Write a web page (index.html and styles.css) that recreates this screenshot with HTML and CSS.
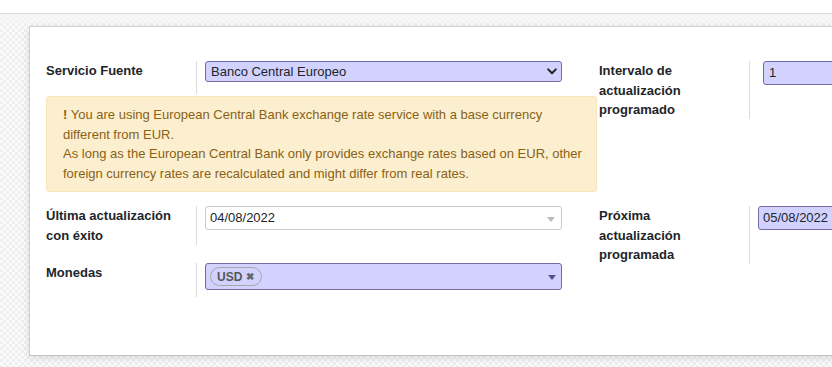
FILE: index.html
```html
<!DOCTYPE html>
<html lang="es">
<head>
  <meta charset="UTF-8">
  <meta name="viewport" content="width=device-width, initial-scale=1.0">
  <title>Tipos de cambio</title>
  <link rel="stylesheet" href="styles.css">
</head>
<body>
  <div class="topbar"></div>

  <div class="canvas">
    <div class="sheet">

      <div class="section first">
        <div class="group left">
          <div class="row row-service">
            <div class="label">Servicio Fuente</div>
            <div class="field">
              <div class="select required">
                <span>Banco Central Europeo</span>
                <svg class="chevron" width="10" height="7" viewBox="0 0 10 7">
                  <path d="M1.2 1.4 L5 5.2 L8.8 1.4" fill="none" stroke="#222" stroke-width="2" stroke-linecap="round" stroke-linejoin="round"/>
                </svg>
              </div>
            </div>
          </div>
          <div class="alert">
            <b>!</b> You are using European Central Bank exchange rate service with a base currency different from EUR.<br>
            As long as the European Central Bank only provides exchange rates based on EUR, other foreign currency rates are recalculated and might differ from real rates.
          </div>
        </div>

        <div class="group right">
          <div class="row row-tall">
            <div class="label">Intervalo de actualización programado</div>
            <div class="field">
              <div class="input required shifted">1</div>
            </div>
          </div>
        </div>
      </div>

      <div class="section">
        <div class="group left">
          <div class="row row-last">
            <div class="label">Última actualización con éxito</div>
            <div class="field">
              <div class="input date">
                <span>04/08/2022</span>
                <span class="caret light"></span>
              </div>
            </div>
          </div>
          <div class="row row-currency">
            <div class="label">Monedas</div>
            <div class="field">
              <div class="tags required">
                <span class="tag">USD <span class="tag-x">&#10006;</span></span>
                <span class="caret dark"></span>
              </div>
            </div>
          </div>
        </div>

        <div class="group right">
          <div class="row row-tall">
            <div class="label">Próxima actualización programada</div>
            <div class="field">
              <div class="input required">05/08/2022</div>
            </div>
          </div>
        </div>
      </div>

    </div>
  </div>
</body>
</html>
```

FILE: styles.css
```css
html, body {
  margin: 0;
  height: 100%;
  overflow: hidden;
}

body {
  font-family: 'Liberation Sans', Arial, sans-serif;
  font-size: 13px;
  line-height: 1.5;
  color: #212529;
  background-color: #f6f6f6;
}

.topbar {
  height: 13px;
  background: #fff;
  border-bottom: 1px solid #dcdce2;
}

.canvas {
  height: 353px;
  padding: 12px 0 0 29px;
  background-color: #f7f7f7;
  background-image:
    linear-gradient(to bottom, rgba(246, 246, 248, 0.9), rgba(246, 246, 248, 0) 12px),
    repeating-conic-gradient(#efefef 0 25%, #fbfbfb 0 50%);
  background-size: 100% 100%, 6px 6px;
  box-sizing: border-box;
}

.sheet {
  width: 1140px;
  height: 330px;
  box-sizing: border-box;
  padding: 34px 0 0 16px;
  background: #fff;
  border: 1px solid #cfcdda;
  border-bottom-color: #c2c2c2;
  box-shadow: 0 2px 8px rgba(0, 0, 0, 0.12);
}

/* sections: pairs of left/right groups */
.section {
  display: flex;
  gap: 2px;
}

.group.left {
  flex: none;
  width: 551px;
}

.group.right {
  flex: 1;
}

.row {
  display: flex;
}

.label {
  flex: none;
  width: 135px;
  padding-right: 15px;
  border-right: 1px solid #dcdcdc;
  font-weight: bold;
}

.field {
  padding-left: 8px;
}

.row-service .label { height: 33px; }
.row-tall .label { height: 58px; }
.row-last { margin-bottom: 18px; }
.row-last .label { height: 39px; }
.row-currency .label { height: 34px; }

/* inputs */
.select,
.input,
.tags {
  box-sizing: border-box;
  width: 357px;
  border: 1px solid #ccc;
  border-radius: 3px;
  display: flex;
  align-items: center;
  justify-content: space-between;
}

.required {
  background: #d2d2ff;
  border-color: #7669a8;
}

.select {
  height: 21px;
  padding: 0 3px 0 5px;
}

.chevron {
  margin-right: 1px;
}

.input {
  height: 24px;
  padding: 0 6px 0 4px;
}

.input.shifted {
  margin-left: 5px;
  padding-left: 5px;
}

.caret {
  width: 0;
  height: 0;
  border-left: 4px solid transparent;
  border-right: 4px solid transparent;
  border-top: 5px solid #bbb;
  margin-top: 2px;
}

.caret.dark {
  border-top-color: #5b4d8c;
}

.tags {
  height: 27px;
  padding: 0 5px 0 4px;
}

.tag {
  display: inline-flex;
  align-items: center;
  gap: 4px;
  height: 19px;
  padding: 0 7px 0 6px;
  border: 1px solid #a7a7a7;
  border-radius: 10px;
  font-size: 12px;
  font-weight: bold;
  color: #555;
  box-sizing: border-box;
}

.tag-x {
  font-size: 10px;
  font-weight: bold;
  color: #666;
}

/* alert */
.alert {
  margin: 2px 0 14px;
  padding: 8px 12px 8px 16px;
  background: #fcefcf;
  border: 1px solid #f9e5bb;
  border-radius: 3px;
  color: #8a6116;
}
```
